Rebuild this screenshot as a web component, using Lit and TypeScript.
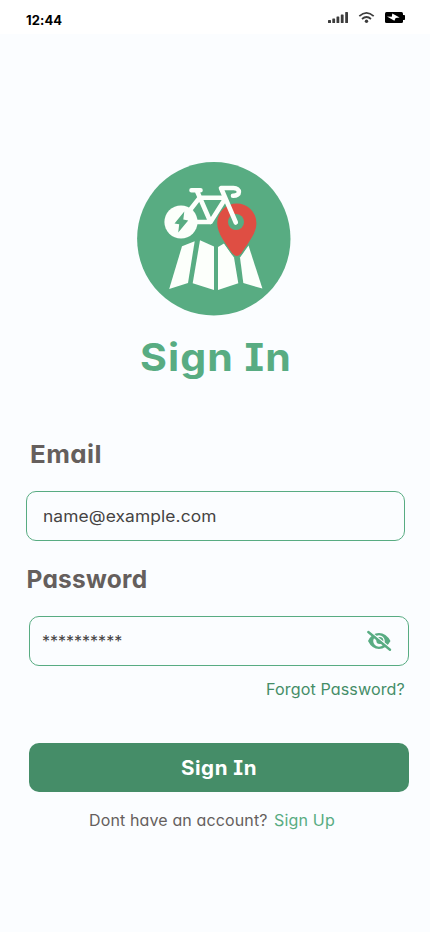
import { LitElement, html, css } from "lit";
import { customElement } from "lit/decorators.js";

@customElement("status-bar")
class StatusBar extends LitElement {
  static styles = css`
    :host { display: flex; height: 34px; box-sizing: border-box; background: #fff; justify-content: space-between; padding: 0 25px 0 26px; }
    .time { font: 700 13px/40px Inter, sans-serif; color: #000; letter-spacing: 0.1px; }
    svg { display: block; margin-top: 9px; }
  `;
  render() {
    return html`
      <span class="time">12:44</span>
      <svg width="78" height="16" viewBox="327 9 78 16">
        <g fill="#3c3c3c">
          <rect x="328" y="20" width="3" height="3" rx=".6" /><rect x="332.3" y="18.5" width="2.8" height="4.5" rx=".6" />
          <rect x="336.5" y="16.5" width="2.8" height="6.5" rx=".6" /><rect x="340.8" y="14.5" width="2.8" height="8.5" rx=".6" />
          <rect x="345.2" y="12" width="2.8" height="11" rx=".6" /><circle cx="366.5" cy="21.2" r="1.7" />
        </g>
        <g fill="none" stroke="#3c3c3c" stroke-width="1.7">
          <path d="M359.3 16.2q7.2-6.6 14.4 0M362 19q4.5-4 9 0" />
        </g>
        <rect x="385" y="12" width="18" height="11" rx="1.5" /><rect x="402" y="15" width="3" height="5" rx=".8" />
        <path fill="#fff" d="M387 16.500L391.800 16.700 392.300 13.600 399.600 17.600 395.600 17.900 394.400 20.800Z" />
      </svg>`;
  }
}

@customElement("brand-logo")
class BrandLogo extends LitElement {
  static styles = css`:host, svg { display: block; }`;
  render() {
    return html`<svg width="156" height="156" viewBox="136 161 156 156">
      <circle cx="213.8" cy="238.8" r="76.7" fill="#58ac82" />
      <g fill="#fcfffb">
        <path d="M182 246.3L194.7 241.2 188 283.1 169.2 289Z" />
        <path d="M200 240.3L214 246.5V290L192.7 283.3Z" />
        <path d="M218 247L224 243.6 234 257.5 238.3 283.3 218 290Z" />
        <path d="M240 257.6L248.5 245.6 262.4 288.6 243.3 283Z" />
      </g>
      <path fill="#df4e43" stroke="#58ac82" stroke-width="2" paint-order="stroke" d="M217.2 223a19.6 19.6 0 0 1 39.2 0c0 11-9 21-15.2 30.5q-4.4 4.8-8.8 0C226 244 217.2 234 217.2 223Z" />
      <circle cx="236" cy="222" r="8" fill="#58ac82" />
      <circle cx="181" cy="222" r="16.6" fill="#fcfffb" />
      <g fill="none" stroke="#fcfffb" stroke-width="4.6" stroke-linecap="round" stroke-linejoin="round">
        <path d="M191.5 190.3H200.5M197 191L210.5 222 225 199M190 210L199.7 197.7H223M195 222H210.5" />
        <path d="M235.8 222.5L221 188H233.5C240.5 188 241 196 233 195.8" />
      </g>
      <path fill="#58ac82" d="M184.3 211.5L174.5 223.5 179.2 224.2 178.2 232.5 188.2 220.4 183.3 219.6Z" />
    </svg>`;
  }
}

@customElement("app-root")
class AppRoot extends LitElement {
  static styles = css`
    :host { display: flex; flex-direction: column; width: 430px; height: 932px; overflow: hidden; background: #fbfdff; font-family: Inter, sans-serif; font-feature-settings: "cv08", "cv11"; color: #655f5d; }
    main { display: flex; flex-direction: column; }
    main span, .join a { display: inline-block; transform-origin: left center; }
    brand-logo { margin: 127px 0 0 136px; }
    h1, h2, p { margin: 0; white-space: nowrap; }
    h1 { margin: 15px 0 0 139.500px; height: 50px; font-size: 38.5px; line-height: 50px; font-weight: 700; color: #58ac82; }
    h2 { font-size: 24.5px; line-height: 32px; font-weight: 700; }
    .t-title { letter-spacing: 1px; transform: scaleX(1.067); }
    .t-email { letter-spacing: 0.4px; transform: scaleX(1.06); }
    .t-address { letter-spacing: 0.1px; transform: scaleX(1.085); }
    .t-password { letter-spacing: 0.25px; }
    .t-forgot { letter-spacing: 0.1px; transform: scaleX(1.04); }
    .t-button { letter-spacing: 0.5px; transform: translate(-2px, 1px) scaleX(1.055); }
    .email-label { margin: 56px 0 0 29.5px; }
    .password-label { margin: 22px 0 0 26.5px; }
    .field { box-sizing: border-box; display: flex; align-items: center; height: 50px; border: 1px solid #58ac82; border-radius: 10px; white-space: nowrap; color: #454343; font-size: 16px; }
    .email { width: 379px; margin: 21px 0 0 26px; padding-left: 16px; font-feature-settings: normal; }
    .password { width: 380px; margin: 21px 0 0 29px; padding: 0 16px 0 12px; justify-content: space-between; }
    .forgot { height: 24px; margin: 12px 0 0 266px; font-size: 15.5px; line-height: 24px; color: #458d68; }
    button { display: block; width: 380px; height: 49px; margin: 41px 0 0 29px; padding: 0; border: 0; border-radius: 10px; background: #458d68; color: #fff; font: 700 19.5px/49px Inter, sans-serif; font-feature-settings: "cv08", "cv11"; }
    .join { display: flex; margin: 17px 0 0 88.5px; font-size: 15.5px; line-height: 24px; }
    .t-join { width: 185px; letter-spacing: 0.12px; transform: scaleX(1.033); }
    .join a { color: #58ac82; letter-spacing: 0.15px; transform: scaleX(1.035); }
  `;
  render() {
    return html`
      <status-bar></status-bar>
      <main>
        <brand-logo></brand-logo>
        <h1><span class="t-title">Sign In</span></h1>
        <h2 class="email-label"><span class="t-email">Email</span></h2>
        <div class="field email"><span class="t-address">name@example.com</span></div>
        <h2 class="password-label"><span class="t-password">Password</span></h2>
        <div class="field password">
          <span class="t-stars">**********</span>
          <svg width="26" height="22" viewBox="0 0 26 22">
            <path fill="#58ac82" fill-rule="evenodd" d="M2 11Q6 3 13 3T24.5 11Q20 19 13 19T2 11ZM13 5.200a5.800 5.800 0 1 0 0 11.600 5.800 5.800 0 0 0 0-11.600Z" />
            <circle cx="13.800" cy="10.500" r="3.500" fill="#58ac82" />
            <path d="M3.500 1L25.500 18.800" stroke="#fbfdff" stroke-width="1.500" /><path d="M2.300 2L24 19.800" stroke="#58ac82" stroke-width="2.400" stroke-linecap="round" />
          </svg>
        </div>
        <p class="forgot"><span class="t-forgot">Forgot Password?</span></p>
        <button><span class="t-button">Sign In</span></button>
        <p class="join"><span class="t-join">Dont have an account?</span><a>Sign Up</a></p>
      </main>`;
  }
}
